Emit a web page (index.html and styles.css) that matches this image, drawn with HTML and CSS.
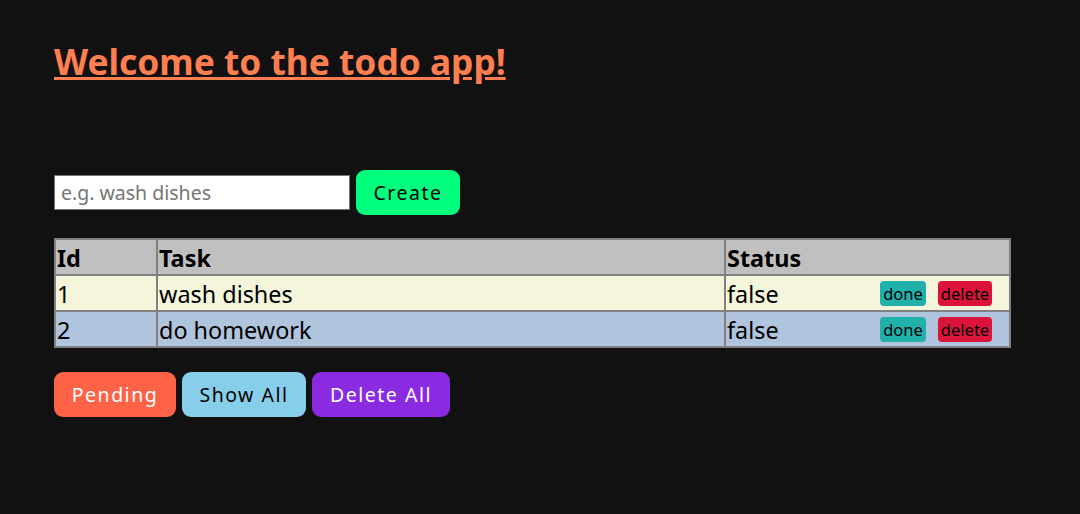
FILE: index.html
```html
<!DOCTYPE html>
<html>
<head>
<meta charset="utf-8">
<link rel="stylesheet" href="styles.css">
</head>
<body>
<div class="page">
  <h1 class="title"><a href="#">Welcome to the todo app!</a></h1>
  <div class="form-row">
    <input class="task-input" type="text" placeholder="e.g. wash dishes">
    <button class="btn btn-create">Create</button>
  </div>
  <table class="todo-table">
    <thead>
      <tr><th class="col-id">Id</th><th class="col-task">Task</th><th class="col-status">Status</th></tr>
    </thead>
    <tbody>
      <tr class="row-odd">
        <td>1</td><td>wash dishes</td>
        <td><div class="status-cell"><span>false</span><span class="actions"><button class="small done">done</button><button class="small del">delete</button></span></div></td>
      </tr>
      <tr class="row-even">
        <td>2</td><td>do homework</td>
        <td><div class="status-cell"><span>false</span><span class="actions"><button class="small done">done</button><button class="small del">delete</button></span></div></td>
      </tr>
    </tbody>
  </table>
  <div class="bottom-row">
    <button class="btn btn-pending">Pending</button>
    <button class="btn btn-show">Show All</button>
    <button class="btn btn-delete-all">Delete All</button>
  </div>
</div>
</body>
</html>
```
FILE: styles.css
```css
html, body {
  margin: 0;
  background: #111111;
}
body {
  font-family: "Noto Sans", sans-serif;
}
.page {
  padding: 38px 54px 0 54px;
}
.title {
  margin: 0;
  font-size: 35.3px;
  font-weight: 700;
  line-height: 46px;
}
.title a {
  color: #ff7f50;
  text-decoration: underline;
}
.form-row {
  display: flex;
  align-items: center;
  gap: 6px;
  margin-top: 86px;
}
.task-input {
  width: 296px;
  height: 35px;
  box-sizing: border-box;
  border: 1px solid #767676;
  padding: 0 6px;
  font-family: "Noto Sans", sans-serif;
  font-size: 19.5px;
  color: #000;
  background: #fff;
}
.task-input::placeholder {
  color: #757575;
}
.btn {
  border: none;
  height: 45px;
  border-radius: 9px;
  padding: 0 12px;
  font-family: "Noto Sans", sans-serif;
  font-size: 19.5px;
  letter-spacing: 1.5px;
}
.btn-create {
  background: #00ff7f;
  color: #000;
  width: 104px;
}
.todo-table {
  margin-top: 23px;
  width: 957px;
  border-collapse: collapse;
  border: 2px solid #808080;
  font-size: 23.4px;
}
.todo-table th, .todo-table td {
  border: 2px solid #808080;
  padding: 1px 1px 0 1px;
  text-align: left;
  height: 33px;
  color: #000;
}
.todo-table thead tr {
  background: #c0c0c0;
}
.col-id { width: 98px; }
.col-task { width: 564px; }
.row-odd { background: #f5f5dc; }
.row-even { background: #b0c4de; }
.status-cell {
  display: flex;
  align-items: center;
  justify-content: space-between;
}
.actions {
  display: flex;
  gap: 12px;
  margin-right: 16px;
}
.small {
  border: none;
  border-radius: 4px;
  height: 25px;
  padding: 0;
  font-family: "Noto Sans", sans-serif;
  font-size: 16.5px;
  color: #000;
}
.done { background: #20b2aa; width: 46px; }
.del { background: #dc143c; width: 54px; }
.bottom-row {
  display: flex;
  gap: 6px;
  margin-top: 24px;
}
.btn-pending { background: #ff6347; color: #fff; width: 122px; }
.btn-show { background: #87ceeb; color: #000; width: 124px; }
.btn-delete-all { background: #8a2be2; color: #fff; width: 138px; }
```
